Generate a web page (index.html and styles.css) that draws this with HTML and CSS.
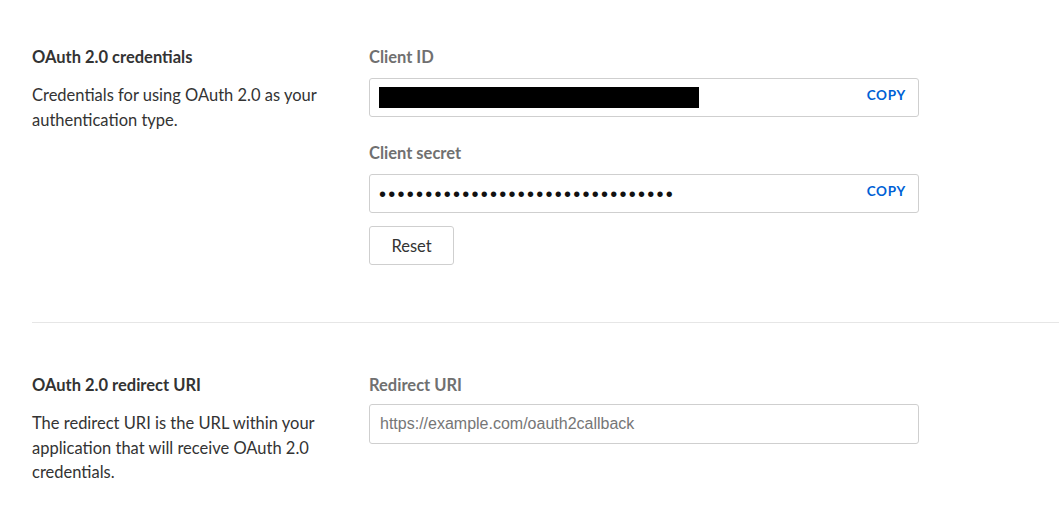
FILE: index.html
```html
<!DOCTYPE html>
<html>
<head>
<meta charset="utf-8">
<link rel="stylesheet" href="styles.css">
</head>
<body>
<div class="page">
  <section class="row first">
    <div class="info">
      <h2 class="title">OAuth 2.0 credentials</h2>
      <p class="desc">Credentials for using OAuth 2.0 as your authentication type.</p>
    </div>
    <div class="fields">
      <div class="label">Client ID</div>
      <div class="box">
        <div class="redact"></div>
        <span class="copy">COPY</span>
      </div>
      <div class="label second">Client secret</div>
      <div class="box">
        <span class="dots">••••••••••••••••••••••••••••••••</span>
        <span class="copy">COPY</span>
      </div>
      <button class="reset">Reset</button>
    </div>
  </section>
  <hr class="divider">
  <section class="row">
    <div class="info">
      <h2 class="title">OAuth 2.0 redirect URI</h2>
      <p class="desc">The redirect URI is the URL within your application that will receive OAuth 2.0 credentials.</p>
    </div>
    <div class="fields">
      <div class="label uri-label">Redirect URI</div>
      <input class="uri" type="text" placeholder="https://example.com/oauth2callback">
    </div>
  </section>
</div>
</body>
</html>
```

FILE: styles.css
```css
* { box-sizing: border-box; }
html, body { margin: 0; padding: 0; background: #fff; }
body {
  font-family: Lato, "Open Sans", sans-serif;
  color: #333;
  font-size: 16.5px;
}
.page {
  padding: 47px 0 0 32px;
}
.row {
  display: flex;
}
.info {
  width: 337px;
  flex: none;
}
.title {
  margin: 0;
  font-size: 16.5px;
  line-height: 20px;
  font-weight: 700;
  color: #333;
}
.desc {
  margin: 16px 0 0;
  width: 300px;
  font-size: 16.5px;
  line-height: 24.5px;
  color: #333;
}
.fields {
  width: 550px;
  display: flex;
  flex-direction: column;
  align-items: flex-start;
}
.label {
  font-size: 16.5px;
  line-height: 20px;
  font-weight: 700;
  color: #707070;
  margin-bottom: 11px;
}
.label.second { margin-top: 26px; }
.label.uri-label { margin-bottom: 9px; }
.box {
  width: 550px;
  height: 39px;
  border: 1px solid #cfcfcf;
  border-radius: 3px;
  display: flex;
  align-items: center;
  justify-content: space-between;
  padding: 0 12px 0 9px;
}
.redact {
  width: 320px;
  height: 21px;
  background: #000;
}
.dots {
  font-family: "Liberation Sans", Arial, sans-serif;
  font-size: 20px;
  line-height: 20px;
  letter-spacing: 2.25px;
  color: #111;
  padding-left: 0;
}
.copy {
  color: #0061d5;
  font-weight: 700;
  font-size: 13.5px;
  letter-spacing: 0.7px;
  padding-bottom: 5px;
}
.reset {
  margin-top: 13px;
  width: 85px;
  height: 39px;
  border: 1px solid #cfcfcf;
  border-radius: 3px;
  background: #fff;
  font-family: Lato, sans-serif;
  font-size: 16.5px;
  color: #333;
  padding: 0;
}
.divider {
  border: none;
  border-top: 1px solid #e6e6e6;
  margin: 57px 0 52px 0;
}
.uri {
  width: 550px;
  height: 40px;
  border: 1px solid #cfcfcf;
  border-radius: 3px;
  padding: 0 10px;
  font-family: "Liberation Sans", Arial, sans-serif;
  font-size: 16px;
  color: #333;
  outline: none;
}
.uri::placeholder { color: #767676; }
```
